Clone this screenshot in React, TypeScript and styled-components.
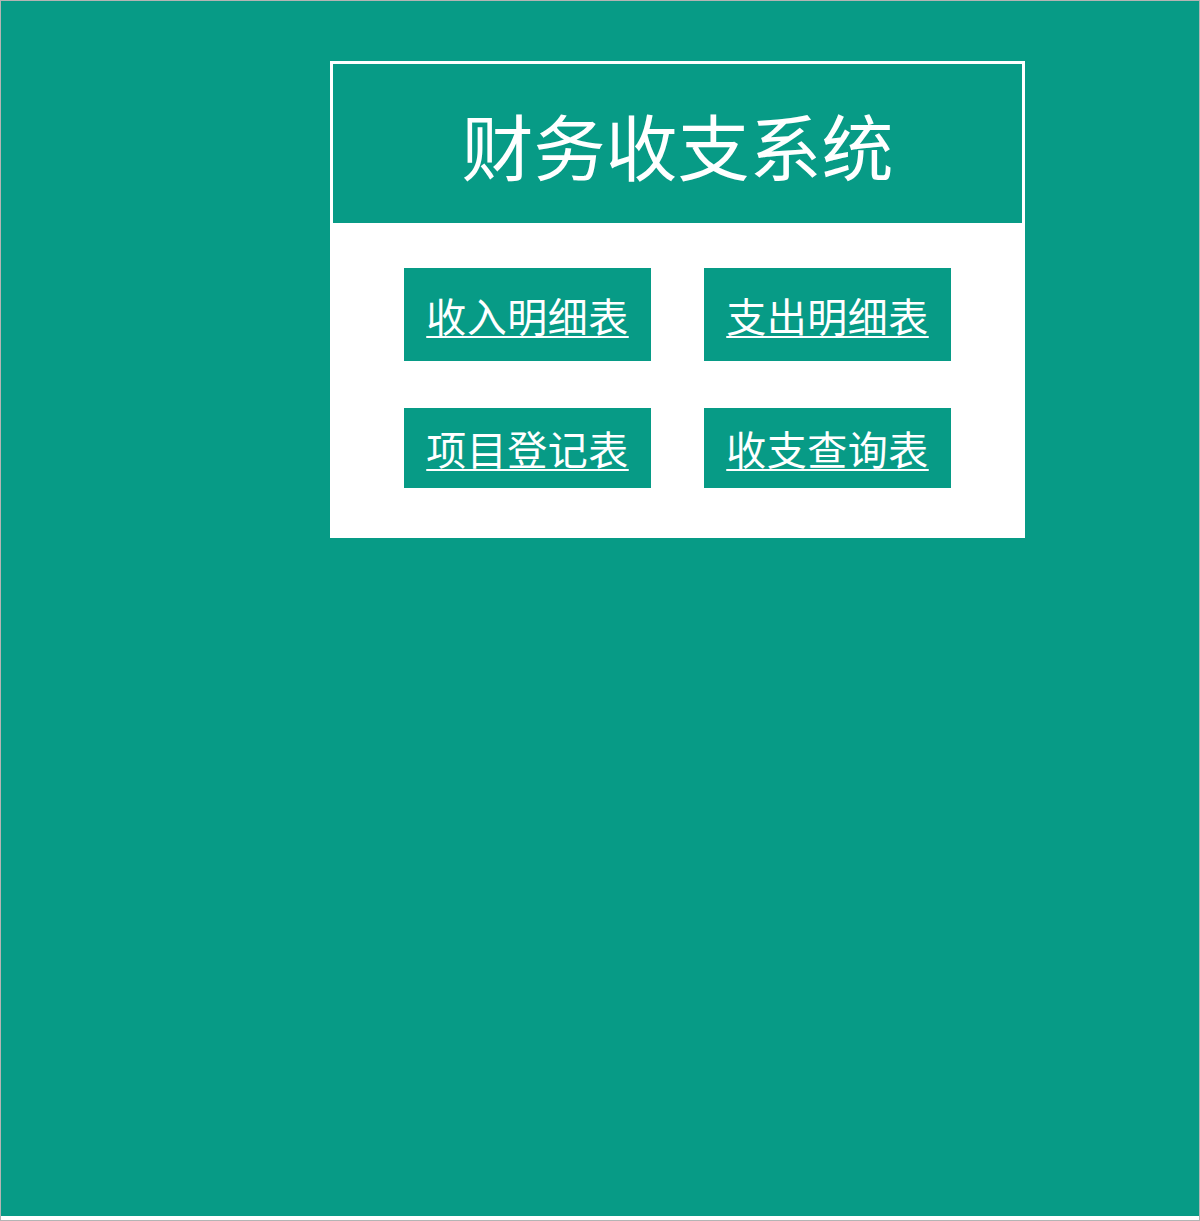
import React from 'react'
import styled, {createGlobalStyle} from 'styled-components'

const GlobalStyle = createGlobalStyle`
    html, body, #root {
        margin: 0;
        padding: 0;
        width: 100%;
        height: 100%;
    }

    body {
        font-family: "Noto Sans CJK SC", "Liberation Serif", sans-serif;
        background: #ffffff;
    }

    * {
        box-sizing: border-box;
    }
`

const Frame = styled.div`
    width: 1200px;
    height: 1221px;
    border: 1px solid #b4b4b4;
    padding-bottom: 4px;
    background: #ffffff;
`

const Page = styled.div`
    height: 100%;
    background: #079b86;
    padding: 60px 0 0 329px;
`

const Panel = styled.div`
    width: 695px;
    background: #ffffff;
    padding: 3px 3px 0;
`

const Header = styled.div`
    height: 159px;
    background: #079b86;
    display: flex;
    align-items: center;
    justify-content: center;
`

const Title = styled.h1`
    margin: 0;
    color: #ffffff;
    font-size: 72px;
    font-weight: 400;
    line-height: 1;
    letter-spacing: 0;
`

const Menu = styled.div`
    display: grid;
    grid-template-columns: 247px 247px;
    column-gap: 53px;
    row-gap: 47px;
    padding: 45px 0 50px 71px;
`

const MenuItem = styled.a<{ $h: number }>`
    height: ${p => p.$h}px;
    background: #079b86;
    color: #ffffff;
    font-size: 40px;
    line-height: 1;
    letter-spacing: 0.5px;
    text-decoration: underline;
    text-decoration-thickness: 2px;
    text-underline-offset: 4px;
    display: flex;
    align-items: center;
    justify-content: center;
    cursor: pointer;
`

const items = [
    {label: '收入明细表', h: 93},
    {label: '支出明细表', h: 93},
    {label: '项目登记表', h: 80},
    {label: '收支查询表', h: 80},
]

export default function App() {
    return (
        <>
            <GlobalStyle/>
            <Frame>
                <Page>
                    <Panel>
                        <Header>
                            <Title>财务收支系统</Title>
                        </Header>
                        <Menu>
                            {items.map(item => (
                                <MenuItem key={item.label} $h={item.h} href="#">
                                    {item.label}
                                </MenuItem>
                            ))}
                        </Menu>
                    </Panel>
                </Page>
            </Frame>
        </>
    )
}
